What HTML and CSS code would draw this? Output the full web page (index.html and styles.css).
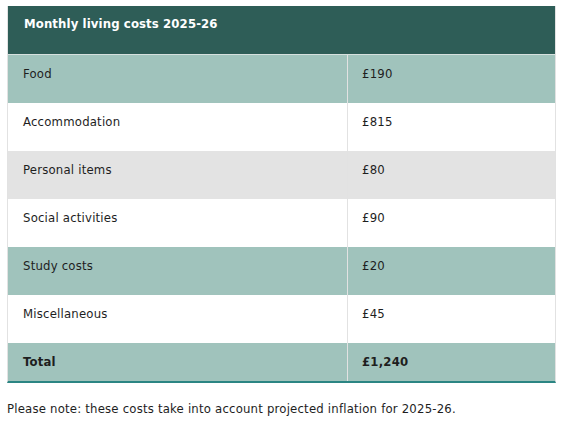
FILE: index.html
```html
<!DOCTYPE html>
<html lang="en">
<head>
<meta charset="utf-8">
<title>Monthly living costs 2025-26</title>
<link rel="stylesheet" href="styles.css">
</head>
<body>
<div class="wrap">
  <table class="costs">
    <colgroup><col class="col-item"><col class="col-amount"></colgroup>
    <thead>
      <tr><th colspan="2" class="title">Monthly living costs 2025-26</th></tr>
    </thead>
    <tbody>
      <tr class="teal"><td>Food</td><td>£190</td></tr>
      <tr class="white"><td>Accommodation</td><td>£815</td></tr>
      <tr class="grey"><td>Personal items</td><td>£80</td></tr>
      <tr class="white"><td>Social activities</td><td>£90</td></tr>
      <tr class="teal"><td>Study costs</td><td>£20</td></tr>
      <tr class="white"><td>Miscellaneous</td><td>£45</td></tr>
      <tr class="teal total"><td>Total</td><td>£1,240</td></tr>
    </tbody>
  </table>
  <p class="note">Please note: these costs take into account projected inflation for 2025-26.</p>
</div>
</body>
</html>
```
FILE: styles.css
```css
html, body {
  margin: 0;
  padding: 0;
  background: #ffffff;
}
body {
  font-family: "DejaVu Sans Condensed", "DejaVu Sans", Verdana, sans-serif;
  font-size: 13px;
  line-height: 17px;
  letter-spacing: 0.2px;
  color: #1e1e1e;
}
.wrap {
  padding: 6px 0 0 7px;
  width: 549px;
}
.costs {
  width: 549px;
  table-layout: fixed;
  border-collapse: separate;
  border-spacing: 0;
  border-left: 1px solid #e2e2e2;
  border-right: 1px solid #e2e2e2;
  border-bottom: 2px solid #2b8583;
}
.col-item { width: 340px; }
.col-amount { width: 207px; }
.title {
  background: #2e5d57;
  color: #ffffff;
  font-weight: bold;
  letter-spacing: 0.12px;
  text-align: left;
  padding: 9px 16px 22px;
  border-bottom: 1px solid #d6e0de;
}
.costs td {
  padding: 10px 16px 21px;
  text-align: left;
  vertical-align: top;
}
.costs td:first-child {
  border-right: 1px solid #e2e2e2;
  padding-left: 15px;
}
.costs td:last-child {
  padding-left: 14px;
}
.teal td { background: #a0c3bc; }
.white td { background: #ffffff; }
.grey td { background: #e3e3e3; }
.total td {
  font-weight: bold;
  padding-top: 10px;
  padding-bottom: 11px;
}
.note {
  margin: 17px 0 0 0;
}
```
